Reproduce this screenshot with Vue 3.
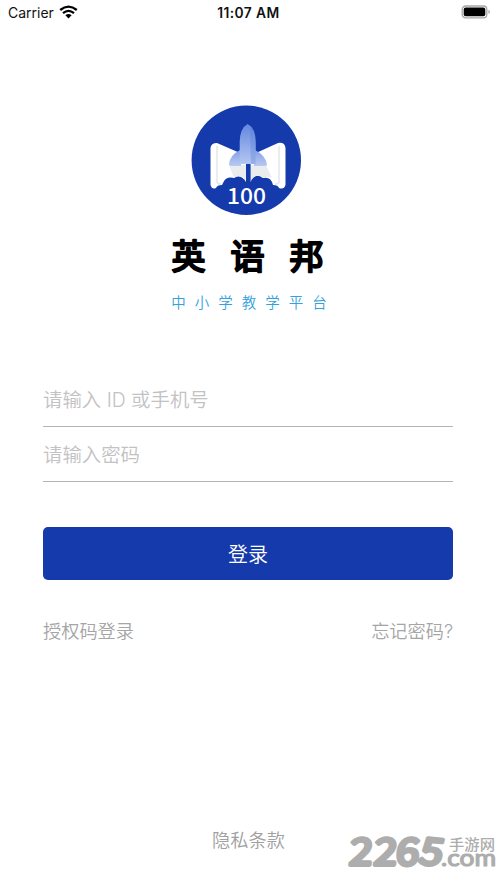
<script setup>
import { ref } from 'vue'

const account = ref('')
const password = ref('')
</script>

<template>
  <div class="screen">
    <header class="status">
      <div class="carrier">
        <span>Carrier</span>
        <svg class="wifi" width="19" height="14" viewBox="0 0 19 14">
          <path d="M1.200 5Q9.500-1.800 17.800 5" />
          <path d="M4 8.100Q9.500 3.600 15 8.100" />
          <path class="fill" d="M6.400 10.300Q9.500 7.800 12.600 10.300L9.500 13.400Z" />
        </svg>
      </div>
      <span class="time">11:07 AM</span>
      <div class="power">
        <svg width="30" height="14" viewBox="0 0 30 14">
          <rect x="1.2" y="1" width="24.6" height="11.8" rx="3.4" fill="#fff" stroke="#a6a6a6" stroke-width="1.3" />
          <rect x="2.7" y="2.5" width="21.6" height="8.8" rx="2" fill="#000" />
          <path d="M27.500 4.8Q30.1 6.9 27.500 9Z" fill="#999" />
        </svg>
      </div>
    </header>

    <main class="content">
      <section class="brand">
        <svg class="logo" width="120" height="120" viewBox="0 0 120 120">
          <defs>
            <linearGradient id="body" x1="0" y1="0" x2="0" y2="1">
              <stop offset="0" stop-color="#6387e0" />
              <stop offset="1" stop-color="#b5c7f1" />
            </linearGradient>
            <linearGradient id="wing" x1="0" y1="0" x2="0" y2="1">
              <stop offset="0" stop-color="#839fe5" />
              <stop offset="1" stop-color="#b9caf1" />
            </linearGradient>
          </defs>
          <circle cx="60.3" cy="60.2" r="54.7" fill="#153aab" />
          <path d="M24.500 48Q25 43 31 43L54 53H70L92 43Q99 42 99.500 48V85Q98 90 93 88Q92 85 87 85Q85 76 77 78Q71 73 66 79L64.500 82H60L58 79Q53 74 48 78Q40 76 37 83L36 85Q31 85 30 88Q26 90 24.500 85Z" fill="#fff" />
          <path d="M31 46V82Q31 84 35 84M93 46V82Q93 84 89 84" fill="none" stroke="#e9eaec" stroke-width="1.800" />
          <path d="M43 65H80L86 78Q82 76 77 78Q71 73 66 79H58Q53 74 48 78Z" fill="#ebecee" />
          <path d="M54 50Q44 55 43 64Q43 66 46 66H55V64H68V66H78Q81 66 81 64Q79 55 69 50Z" fill="url(#wing)" />
          <path d="M53.700 64V42Q54 28 61.600 24Q69.500 28 69.700 42V64Z" fill="url(#body)" />
          <path d="M64 26Q69.500 31 69.700 42V64H65Z" fill="#5277d5" opacity=".3" />
          <path d="M60 64H64.600V84H60Z" fill="#153aab" />
          <text x="60.500" y="103.500" class="score" textLength="39" lengthAdjust="spacingAndGlyphs">100</text>
        </svg>
        <h1 class="title">
          <svg width="180" height="50" viewBox="0 0 180 50">
            <text x="12.500" y="38">英语邦</text>
          </svg>
        </h1>
        <p class="subtitle">中小学教学平台</p>
      </section>

      <form class="form" @submit.prevent>
        <input v-model="account" class="field" type="text" placeholder="请输入 ID 或手机号" />
        <input v-model="password" class="field" type="password" placeholder="请输入密码" />
        <button class="submit" type="submit">登录</button>
        <div class="links">
          <a>授权码登录</a>
          <a>忘记密码?</a>
        </div>
      </form>
    </main>

    <footer class="footer">
      <a class="privacy">隐私条款</a>
      <svg class="watermark" width="157" height="56" viewBox="0 0 157 56">
        <g class="digits">
          <text transform="translate(8.500 39) skewX(-6)" textLength="23" lengthAdjust="spacingAndGlyphs">2</text>
          <text transform="translate(33 39) skewX(-6)" textLength="23" lengthAdjust="spacingAndGlyphs">2</text>
          <text transform="translate(55 38.500) skewX(-6)" textLength="23" lengthAdjust="spacingAndGlyphs">6</text>
          <text transform="translate(77.500 37.500) rotate(6) skewX(-7)" textLength="23" lengthAdjust="spacingAndGlyphs">5</text>
        </g>
        <text class="site" x="109" y="23.500" textLength="46" lengthAdjust="spacingAndGlyphs">手游网</text>
        <text class="domain" x="101" y="39.500" textLength="55" lengthAdjust="spacingAndGlyphs">.com</text>
      </svg>
    </footer>
  </div>
</template>

<style>
body {
  margin: 0;
  background: #fff;
}
</style>

<style scoped>
.screen {
  display: flex;
  flex-direction: column;
  width: 497px;
  height: 883px;
  overflow: hidden;
  background: #fff;
  font-family: Inter, "Noto Sans CJK SC", sans-serif;
  font-weight: 350;
}
.status {
  display: grid;
  grid-template-columns: 1fr auto 1fr;
  align-items: center;
  height: 26px;
  padding: 0 6px 0 8px;
  box-sizing: border-box;
  color: #111;
  font-size: 14px;
  font-weight: 400;
}
.carrier {
  display: flex;
  align-items: center;
  gap: 5px;
  margin-top: -1px;
}
.wifi {
  margin-top: -2px;
}
.wifi path {
  fill: none;
  stroke: #000;
  stroke-width: 2.3;
}
.wifi .fill {
  fill: #000;
  stroke: none;
}
.time {
  margin-right: 2px;
  font-weight: 600;
  font-size: 13.8px;
  letter-spacing: 0.4px;
}
.power {
  display: flex;
  justify-content: flex-end;
  margin-top: -2px;
}
.content {
  flex: 1;
  padding: 74px 43px 0;
}
.brand {
  display: flex;
  flex-direction: column;
  align-items: center;
}
.logo {
  margin-right: 5px;
}
.score {
  fill: #fff;
  font: 500 22.5px "Noto Sans CJK SC", sans-serif;
  text-anchor: middle;
}
.title {
  display: flex;
  margin: 11px 0 0;
}
.title text {
  font: 400 34px "Noto Sans CJK SC", sans-serif;
  letter-spacing: 25px;
  fill: #000;
  stroke: #000;
  stroke-width: 2.2;
  stroke-linejoin: round;
  stroke-linecap: round;
}
.subtitle {
  margin: 10px 0 0;
  padding-left: 10px;
  font: 350 14.5px/22px "Noto Sans CJK SC", sans-serif;
  letter-spacing: 9px;
  color: #35a1dc;
}
.form {
  display: flex;
  flex-direction: column;
  margin-top: 59px;
}
.field {
  box-sizing: border-box;
  width: 410px;
  height: 55px;
  padding: 1px 0 0;
  border: 0;
  border-bottom: 1px solid #b3b3b5;
  border-radius: 0;
  outline: 0;
  background: transparent;
  font: inherit;
  font-size: 19.4px;
}
.field::placeholder {
  color: #c2c2c4;
  opacity: 1;
}
.submit {
  width: 410px;
  height: 53px;
  margin-top: 45px;
  padding: 0;
  border: 0;
  border-radius: 5px;
  background: #153aab;
  color: #fff;
  font: inherit;
  font-size: 20px;
}
.links {
  display: flex;
  justify-content: space-between;
  margin-top: 37px;
  width: 410px;
  font-size: 18.2px;
  line-height: 28px;
  color: #a5a5a5;
}
.footer {
  display: grid;
  grid-template-columns: 1fr auto 1fr;
  align-items: start;
  height: 57px;
}
.privacy {
  grid-column: 2;
  font-size: 18.2px;
  line-height: 28px;
  color: #a0a0a0;
}
.watermark {
  justify-self: end;
}
.digits {
  fill: #adadad;
  stroke: #adadad;
  stroke-width: 3.8;
  stroke-linejoin: round;
  font: 400 37px "Noto Sans CJK SC", sans-serif;
}
.site {
  fill: #adadad;
  font: 500 14.5px "Noto Sans CJK SC", sans-serif;
}
.domain {
  fill: #adadad;
  stroke: #adadad;
  stroke-width: 1.2;
  stroke-linejoin: round;
  font: 400 23px Lato, sans-serif;
}
</style>
